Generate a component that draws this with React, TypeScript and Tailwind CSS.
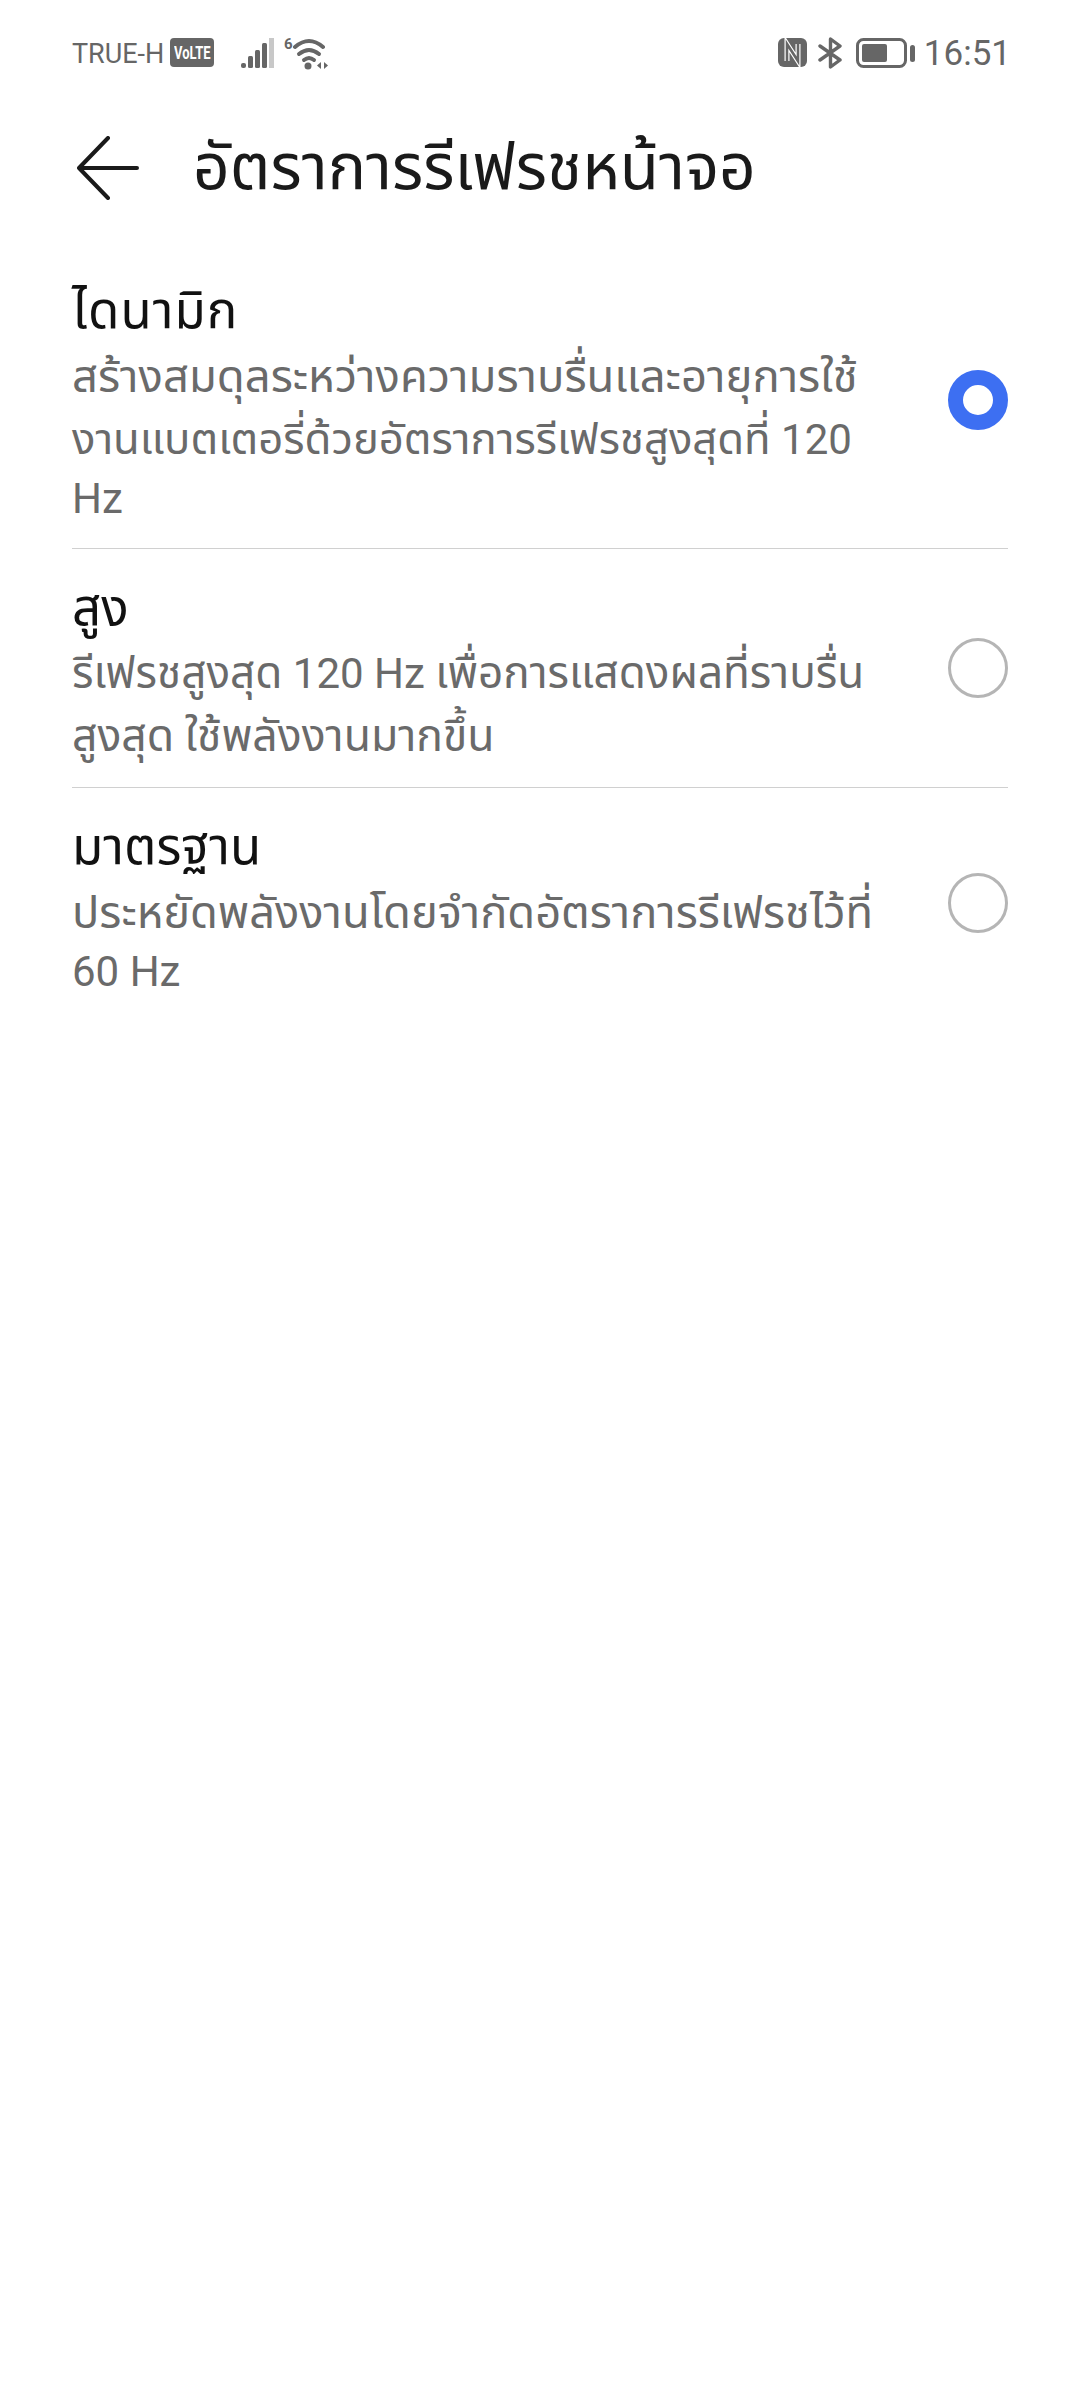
const FONT = "font-['Roboto','Noto_Sans','Noto_Sans_Thai','Liberation_Sans',sans-serif]";

const OPTIONS = [
  {
    title: "ไดนามิก",
    titleClass: "tracking-[1px]",
    rowClass: "h-[297px] border-b",
    desc: [
      { text: "สร้างสมดุลระหว่างความราบรื่นและอายุการใช้", size: "text-[45.4px]" },
      { text: "งานแบตเตอรี่ด้วยอัตราการรีเฟรชสูงสุดที่ 120", size: "text-[43.6px]" },
      { text: "Hz", size: "" },
    ],
    selected: true,
  },
  {
    title: "สูง",
    titleClass: "",
    rowClass: "h-[239px] border-b",
    desc: [
      { text: "รีเฟรชสูงสุด 120 Hz เพื่อการแสดงผลที่ราบรื่น", size: "text-[44px]" },
      { text: "สูงสุด ใช้พลังงานมากขึ้น", size: "text-[44.5px]" },
    ],
    selected: false,
  },
  {
    title: "มาตรฐาน",
    titleClass: "",
    rowClass: "h-[230px]",
    desc: [
      { text: "ประหยัดพลังงานโดยจำกัดอัตราการรีเฟรชไว้ที่", size: "text-[45.2px]" },
      { text: "60 Hz", size: "" },
    ],
    selected: false,
  },
];

// thai glyphs run bigger than latin ones on this screen
function DescLine({ text, size }: { text: string; size: string }) {
  const parts = text.split(/([A-Za-z0-9 ]+)/).filter(Boolean);
  const latinOnly = /^[A-Za-z0-9 ]+$/.test(text);
  return (
    <div className={`whitespace-nowrap text-[#6a6a6a] ${latinOnly ? "h-[56px] leading-[56px]" : "h-[63px] leading-[63px]"}`}>
      {parts.map((p, i) =>
        /^[A-Za-z0-9 ]+$/.test(p) ? (
          <span key={i} className="text-[42px]">{p}</span>
        ) : (
          <span key={i} className={size}>{p}</span>
        )
      )}
    </div>
  );
}

function Radio({ selected }: { selected: boolean }) {
  if (selected) {
    return <div className="h-[60px] w-[60px] shrink-0 rounded-full border-[15px] border-[#3d6ff2] bg-white" />;
  }
  return <div className="h-[60px] w-[60px] shrink-0 rounded-full border-[3px] border-[#b5b5b5] bg-white" />;
}

function StatusBar() {
  return (
    <div className="flex h-[105px] items-center justify-between text-[#666666]">
      <div className="flex items-center">
        <span className="mt-[4px] text-[27px]">TRUE-H</span>
        <span className="ml-[6px] flex h-[29px] w-[44px] items-center justify-center rounded-[4px] bg-[#666666]">
          <span className="scale-x-[0.72] text-[18px] font-bold text-white">VoLTE</span>
        </span>
        <svg className="ml-[27px]" width="33" height="30" viewBox="0 0 33 30" fill="#666666">
          <rect x="0" y="25" width="5" height="5" rx="2" />
          <rect x="7" y="18" width="5" height="12" rx="1.5" />
          <rect x="14" y="12" width="5" height="18" rx="1.5" />
          <rect x="21" y="5" width="5" height="25" rx="1.5" />
          <rect x="28" y="0" width="5" height="30" fill="#c8c8c8" />
        </svg>
        <svg className="ml-[10px]" width="45" height="34" viewBox="0 0 45 34" fill="none" stroke="#666666" strokeWidth="4" strokeLinecap="round">
          <path d="M11 11 Q25 -1 39 11" />
          <path d="M15 18 Q25 10 35 18" />
          <path d="M20 24 Q25 20 30 24" />
          <circle cx="24" cy="30" r="3.5" fill="#666666" stroke="none" />
          <path d="M37 26 l-4 3.5 l4 3.5 z" fill="#666666" stroke="none" />
          <path d="M40 26 l4 3.5 l-4 3.5 z" fill="#666666" stroke="none" />
          <text x="0" y="13" fontSize="15" fontWeight="700" fill="#666666" stroke="none">6</text>
        </svg>
      </div>
      <div className="mr-[-3px] flex items-center">
        <svg width="29" height="29" viewBox="0 0 29 29">
          <rect x="0" y="0" width="29" height="29" rx="6" fill="#666666" />
          <path d="M9 23 V6 L20 23 V6" fill="none" stroke="#ffffff" strokeWidth="5" />
          <path d="M9 23 V6 L20 23 V6" fill="none" stroke="#666666" strokeWidth="2.6" />
        </svg>
        <svg className="ml-[11px]" width="25" height="32" viewBox="0 0 25 32" fill="none" stroke="#666666" strokeWidth="3.4" strokeLinejoin="round" strokeLinecap="round">
          <path d="M2 9 L22 23 L12.5 30 V2 L22 9 L2 23" />
        </svg>
        <svg className="ml-[13px]" width="59" height="30" viewBox="0 0 59 30">
          <rect x="1.5" y="1.5" width="48" height="27" rx="6" fill="none" stroke="#666666" strokeWidth="3" />
          <rect x="6" y="6" width="25" height="18" rx="2" fill="#666666" />
          <rect x="54" y="7" width="5" height="17" rx="2.5" fill="#666666" />
        </svg>
        <span className="ml-[9px] mt-[4px] text-[35px]">16:51</span>
      </div>
    </div>
  );
}

export default function App() {
  return (
    <div className={`min-h-[2400px] bg-white px-[72px] ${FONT}`}>
      <StatusBar />
      <div className="flex h-[126px] items-center">
        <svg className="ml-[5px]" width="62" height="64" viewBox="0 0 62 64" fill="none" stroke="#1a1a1a" strokeWidth="4" strokeLinecap="round" strokeLinejoin="round">
          <path d="M60 32 H2 M31 2 L2 32 L31 62" />
        </svg>
        <h1 className="ml-[54px] text-[64px] font-normal text-[#1a1a1a]">อัตราการรีเฟรชหน้าจอ</h1>
      </div>
      <div className="mt-[21px]">
        {OPTIONS.map((o) => (
          <div key={o.title} className={`flex items-center justify-between border-[#d0d0d0] ${o.rowClass}`}>
            <div className="w-[820px] self-start pt-[24px]">
              <div className={`text-[51px] leading-[69px] text-[#111111] ${o.titleClass}`}>{o.title}</div>
              {o.desc.map((line) => (
                <DescLine key={line.text} text={line.text} size={line.size} />
              ))}
            </div>
            <Radio selected={o.selected} />
          </div>
        ))}
      </div>
    </div>
  );
}
